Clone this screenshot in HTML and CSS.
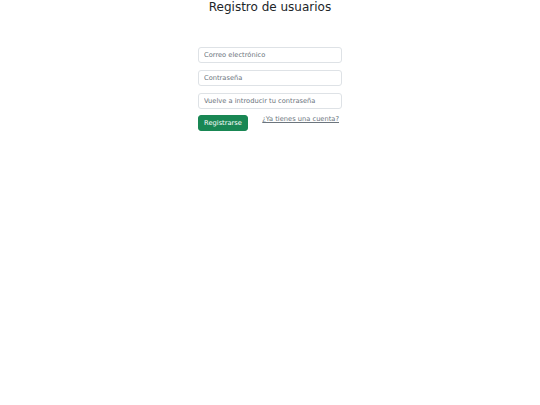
FILE: index.html
```html
<!DOCTYPE html>
<html lang="es">
<head>
<meta charset="utf-8">
<title>Registro de usuarios</title>
<link rel="stylesheet" href="styles.css">
</head>
<body>
<main class="page">
  <h1 class="title">Registro de usuarios</h1>
  <form class="form">
    <input class="field" type="email" placeholder="Correo electrónico">
    <input class="field" type="password" placeholder="Contraseña">
    <input class="field" type="password" placeholder="Vuelve a introducir tu contraseña">
    <div class="actions">
      <button class="btn" type="submit">Registrarse</button>
      <a class="link" href="#">¿Ya tienes una cuenta?</a>
    </div>
  </form>
</main>
</body>
</html>
```
FILE: styles.css
```css
html, body {
  margin: 0;
  padding: 0;
  background: #fff;
}
body {
  font-family: "DejaVu Sans", sans-serif;
  color: #212529;
}
.page {
  display: flex;
  flex-direction: column;
  align-items: center;
}
.title {
  margin: 0;
  font-size: 12px;
  line-height: 15px;
  font-weight: normal;
  color: #212529;
}
.form {
  width: 144px;
  margin-top: 32px;
  display: flex;
  flex-direction: column;
  gap: 7px;
}
.field {
  box-sizing: border-box;
  height: 16px;
  width: 100%;
  margin: 0;
  padding: 0 5px;
  border: 1px solid #dee2e6;
  border-radius: 3px;
  font-family: "DejaVu Sans", sans-serif;
  font-size: 6.7px;
  color: #212529;
  outline: none;
}
.field::placeholder {
  color: #6c757d;
}
.actions {
  display: flex;
  justify-content: space-between;
  align-items: flex-start;
  margin-top: -1px;
}
.btn {
  box-sizing: border-box;
  height: 16px;
  width: 50px;
  padding: 0;
  border: 1px solid #198754;
  border-radius: 3px;
  background: #198754;
  color: #fff;
  font-family: "DejaVu Sans", sans-serif;
  font-size: 6.7px;
}
.link {
  padding: 0 3px;
  font-size: 6.7px;
  line-height: 9px;
  color: #6c757d;
  text-decoration: underline;
}
```
